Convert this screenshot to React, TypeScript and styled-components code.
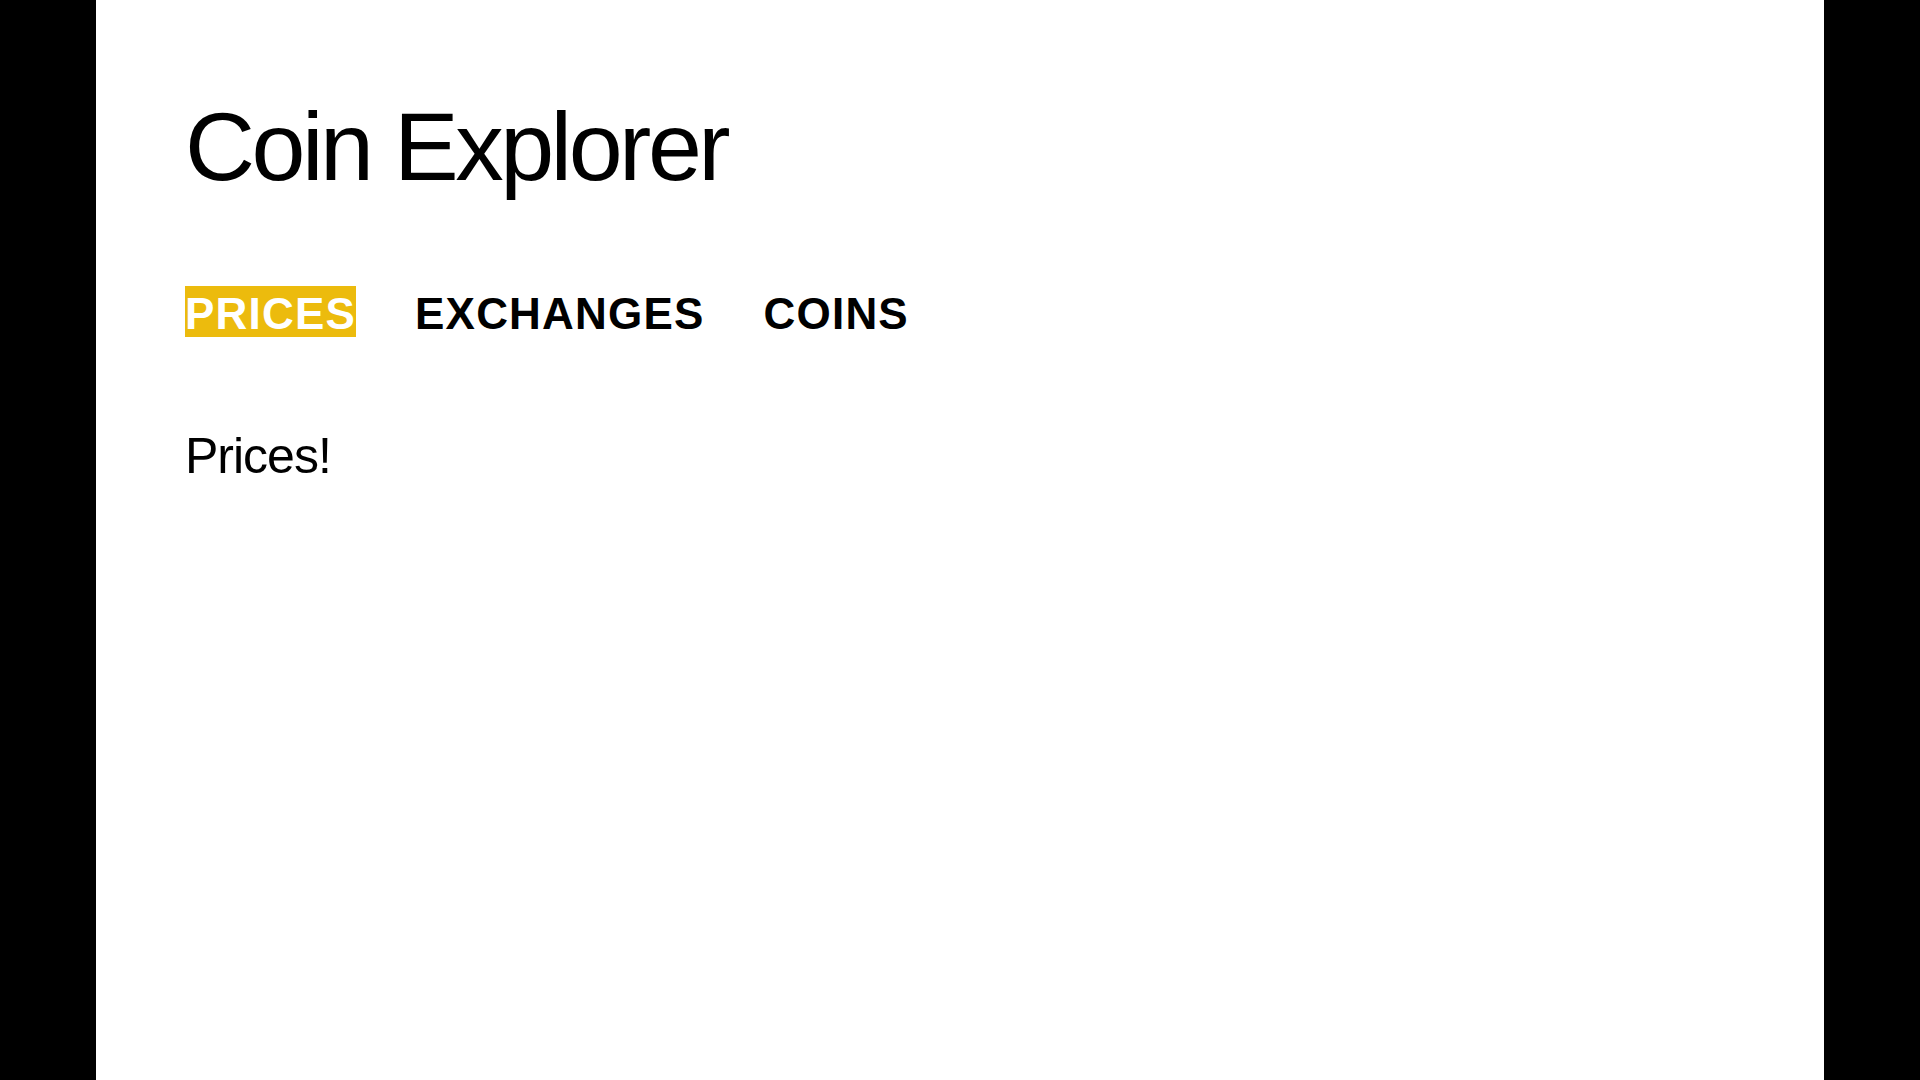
import React from "react";
import styled, { createGlobalStyle } from "styled-components";

const GlobalStyle = createGlobalStyle`
  html, body {
    margin: 0;
    padding: 0;
    background: #000000;
  }
  body {
    font-family: "Liberation Sans", Arial, sans-serif;
    color: #000000;
  }
`;

const Page = styled.div`
  width: 1728px;
  min-height: 100vh;
  margin: 0 auto;
  background: #ffffff;
  box-sizing: border-box;
  padding: 98px 0 0 89px;
`;

const Title = styled.h1`
  margin: 0;
  font-family: "Liberation Sans", Arial, sans-serif;
  font-weight: 400;
  font-size: 97px;
  line-height: 97px;
  letter-spacing: -3.5px;
`;

const Nav = styled.nav`
  display: flex;
  align-items: flex-start;
  gap: 59px;
  margin-top: 91px;
`;

const NavLink = styled.a<{ $active?: boolean }>`
  display: inline-block;
  font-family: "Liberation Sans", Arial, sans-serif;
  font-weight: 700;
  font-size: 44px;
  line-height: 44px;
  letter-spacing: 1.2px;
  padding: 6px 0 1px 0;
  text-decoration: none;
  cursor: pointer;
  color: ${(p) => (p.$active ? "#ffffff" : "#000000")};
  background: ${(p) => (p.$active ? "#ecbb0d" : "transparent")};
`;

const Content = styled.p`
  margin: 94px 0 0 0;
  font-family: "Liberation Sans", Arial, sans-serif;
  font-size: 50px;
  line-height: 50px;
  letter-spacing: -1px;
`;

export default function App() {
  return (
    <>
      <GlobalStyle />
      <Page>
        <Title>Coin Explorer</Title>
        <Nav>
          <NavLink $active>PRICES</NavLink>
          <NavLink>EXCHANGES</NavLink>
          <NavLink>COINS</NavLink>
        </Nav>
        <Content>Prices!</Content>
      </Page>
    </>
  );
}
